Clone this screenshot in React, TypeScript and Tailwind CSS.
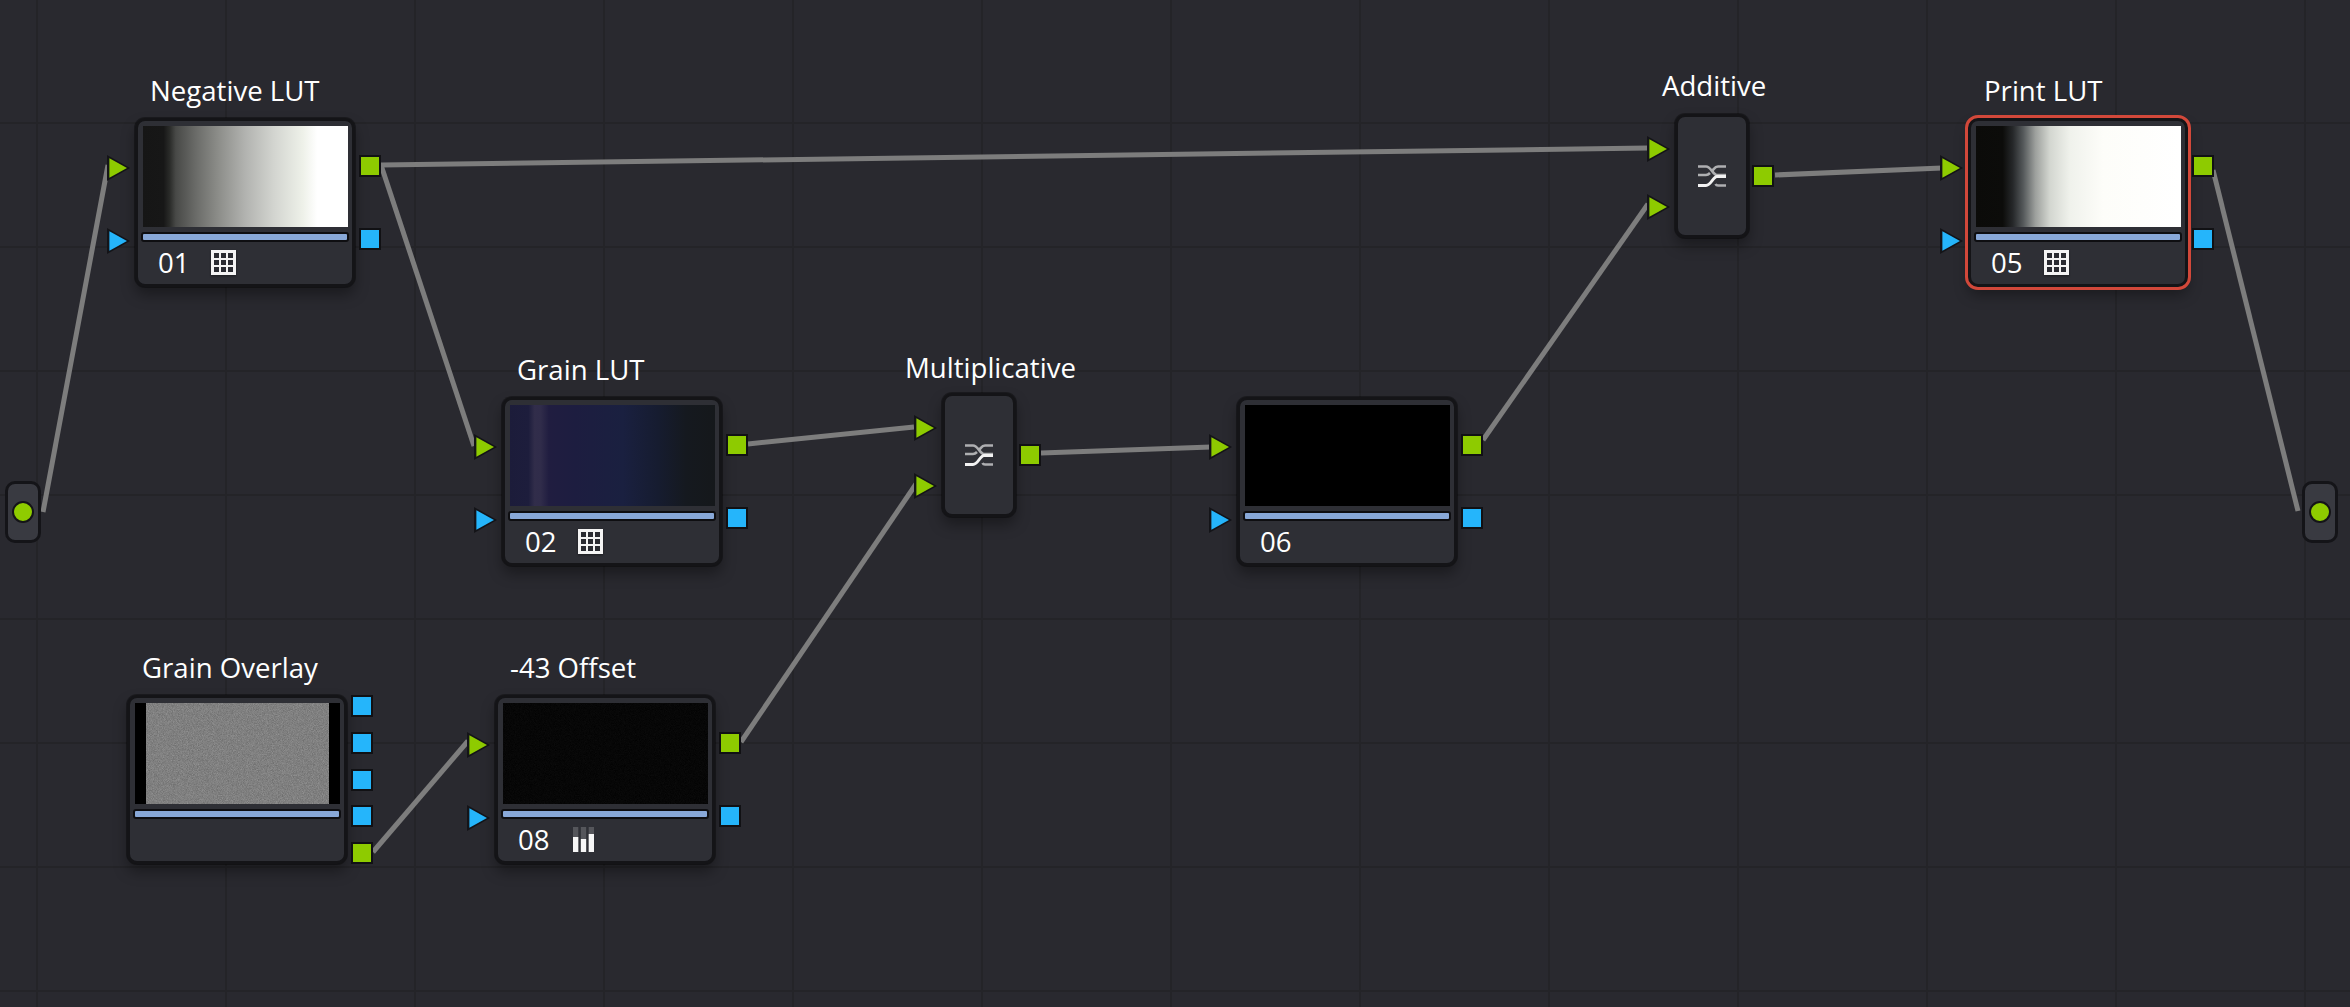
import React from "react";

const GREEN = "#8ecb00";
const BLUE = "#25b5fb";
const FONT = "font-['Open_Sans','Noto_Sans',sans-serif]";

function TriPort({ color }: { color: string }) {
  return (
    <svg width="23" height="26" viewBox="0 0 23 26" className="block shrink-0">
      <polygon points="0,0 23,13 0,26" fill="#141418" />
      <polygon points="2.4,3.2 20,13 2.4,22.8" fill={color} />
    </svg>
  );
}

function SquarePort({ color }: { color: string }) {
  return <div className="w-[22px] h-[22px] shrink-0 border-[2px] border-[#111114]" style={{ background: color }} />;
}

function GridIcon() {
  const cells: React.ReactElement[] = [];
  for (let r = 0; r < 3; r++)
    for (let c = 0; c < 3; c++)
      cells.push(<rect key={`${r}${c}`} x={3 + c * 7} y={3 + r * 7} width="5" height="5" fill="#2a2b31" />);
  return (
    <svg width="25" height="25" viewBox="0 0 25 25" className="drop-shadow-[0_1px_1px_rgba(0,0,0,0.4)]">
      <rect width="25" height="25" fill="#f4f4f4" />
      {cells}
    </svg>
  );
}

function BarsIcon() {
  return (
    <svg width="21" height="25" viewBox="0 0 21 25" className="ml-[2px]">
      <rect x="0" y="0" width="5.3" height="25" fill="#55565b" />
      <rect x="7.85" y="0" width="5.3" height="25" fill="#55565b" />
      <rect x="15.7" y="0" width="5.3" height="25" fill="#55565b" />
      <rect x="0" y="10" width="5.3" height="15" fill="#f6f6f6" />
      <rect x="7.85" y="12" width="5.3" height="13" fill="#f6f6f6" />
      <rect x="15.7" y="7" width="5.3" height="18" fill="#f6f6f6" />
    </svg>
  );
}

function MixIcon() {
  return (
    <svg width="30" height="24" viewBox="0 0 30 24" fill="none">
      <path d="M1 2.5 H9 C14 2.5 16 11 20 11 H29" stroke="#aeafb1" strokeWidth="2.6" />
      <path d="M29 2.5 H21 C18 2.5 17 5 15 7" stroke="#aeafb1" strokeWidth="2.6" />
      <path d="M1 11 H9 C11 11 12 10 13 9" stroke="#aeafb1" strokeWidth="2.6" />
      <path d="M29 21.5 H21 C20 21.5 19 21 18.5 20" stroke="#aeafb1" strokeWidth="2.6" />
      <path d="M1 21.5 H9 C14 21.5 16 12.5 20 12.5 H29" stroke="#f2f2f2" strokeWidth="2.8" />
    </svg>
  );
}

function Label({ text, indent, height }: { text: string; indent: number; height: number }) {
  return (
    <div
      className={`${FONT} text-white text-[27.6px] leading-[38px] whitespace-nowrap`}
      style={{ marginLeft: indent, height }}
    >
      {text}
    </div>
  );
}

type NodeDef = {
  x: number;
  y: number;
  label: string;
  num?: string;
  icon?: "grid" | "bars";
  thumb: string;
  selected?: boolean;
  noInputs?: boolean;
  grainy?: "strong" | "faint";
};

function Grain({ strong }: { strong: boolean }) {
  return strong ? (
    <div className="h-full mx-[11px] bg-[#808080] overflow-hidden">
      <svg width="183" height="101" className="block opacity-20">
        <rect width="183" height="101" filter="url(#grain)" />
      </svg>
    </div>
  ) : (
    <svg width="205" height="101" className="block opacity-[0.05]">
      <rect width="205" height="101" filter="url(#grain)" />
    </svg>
  );
}

function ColorNode({ n }: { n: NodeDef }) {
  return (
    <div className="absolute flex flex-col" style={{ left: n.x - 28, top: n.y - 47 }}>
      <Label text={n.label} indent={n.selected ? 44 : 43} height={47} />
      <div className="flex">
        <div className="w-[28px] flex flex-col gap-[47px] pt-[37px]">
          {!n.noInputs && (
            <>
              <TriPort color={GREEN} />
              <TriPort color={BLUE} />
            </>
          )}
        </div>
        <div
          className={`w-[220px] h-[169px] bg-[#2e2f35] rounded-[10px] border-[3px] border-[#141417] shadow-[0_0_0_1px_rgba(0,0,0,0.35),0_8px_14px_rgba(0,0,0,0.35)] px-[5px] pt-[5px] flex flex-col ${
            n.selected ? "outline-[3px] outline-[#d2483a]" : ""
          }`}
        >
          <div className={`w-[205px] h-[101px] shrink-0 overflow-hidden ${n.thumb}`}>
            {n.grainy && <Grain strong={n.grainy === "strong"} />}
          </div>
          <div className="mt-[5px] -mx-[2px] h-[10px] rounded-[3px] border-[2px] border-[#0e0e11] bg-[#88a8d8]" />
          <div className={`${FONT} flex items-center h-[43px] pl-[15px] text-white text-[27.6px]`}>
            {n.num && <span className="w-[53px]">{n.num}</span>}
            {n.icon === "grid" && <GridIcon />}
            {n.icon === "bars" && <BarsIcon />}
          </div>
        </div>
        <div
          className={`ml-[4px] flex flex-col ${
            n.noInputs ? "h-[169px] justify-between" : "gap-[51px] pt-[37px]"
          }`}
        >
          {n.noInputs && (
            <>
              <SquarePort color={BLUE} />
              <SquarePort color={BLUE} />
              <SquarePort color={BLUE} />
            </>
          )}
          {n.noInputs ? (
            <>
              <SquarePort color={BLUE} />
              <SquarePort color={GREEN} />
            </>
          ) : (
            <>
              <SquarePort color={GREEN} />
              <SquarePort color={BLUE} />
            </>
          )}
        </div>
      </div>
    </div>
  );
}

function MixNode({ x, y, label, indent, labelH }: { x: number; y: number; label: string; indent: number; labelH: number }) {
  return (
    <div className="absolute flex flex-col" style={{ left: x - 28, top: y - labelH }}>
      <Label text={label} indent={indent} height={labelH} />
      <div className="flex">
        <div className="w-[28px] flex flex-col gap-[32px] pt-[22px]">
          <TriPort color={GREEN} />
          <TriPort color={GREEN} />
        </div>
        <div className="w-[74px] h-[124px] bg-[#2e2f35] rounded-[10px] border-[3px] border-[#141417] shadow-[0_0_0_1px_rgba(0,0,0,0.35),0_8px_14px_rgba(0,0,0,0.35)] flex items-center justify-center">
          <MixIcon />
        </div>
        <div className="ml-[3px] pt-[51px]">
          <SquarePort color={GREEN} />
        </div>
      </div>
    </div>
  );
}

function Pill({ side }: { side: "left" | "right" }) {
  return (
    <div
      className={`absolute top-[481px] w-[36px] h-[62px] rounded-[10px] border-[3px] border-[#141418] bg-[#393a41] flex items-center justify-center ${
        side === "left" ? "left-[5px]" : "left-[2302px]"
      }`}
    >
      <div className="w-[22px] h-[22px] rounded-full bg-[#8fcc00] border-[2px] border-[#141418]" />
    </div>
  );
}

const wires: [number, number, number, number][] = [
  [43, 512, 108, 165],
  [381, 165, 474, 446],
  [381, 165, 1648, 148],
  [1775, 175, 1942, 168],
  [2213, 170, 2298, 511],
  [748, 444, 914, 427],
  [1041, 453, 1211, 447],
  [1483, 440, 1648, 204],
  [373, 852, 468, 741],
  [741, 742, 916, 484],
];

const nodes: NodeDef[] = [
  {
    x: 135,
    y: 118,
    label: "Negative LUT",
    num: "01",
    icon: "grid",
    thumb:
      "bg-[linear-gradient(to_right,#161616_0%,#171717_10%,#2a2b29_13%,#484947_16%,#6b6c69_26%,#8a8b87_36%,#b2b3b0_50%,#d3d5d0_64%,#eef1e9_78%,#ffffff_85%,#ffffff_100%)]",
  },
  {
    x: 502,
    y: 397,
    label: "Grain LUT",
    num: "02",
    icon: "grid",
    thumb:
      "bg-[linear-gradient(to_right,#1c1c3a_0%,#1d1d3c_9%,#312d4a_12%,#302c4a_15%,#201d40_19%,#1d1d40_32%,#1a2040_55%,#161c30_72%,#15191f_86%,#15181b_100%)]",
  },
  { x: 1237, y: 397, label: "", num: "06", thumb: "bg-black" },
  { x: 495, y: 695, label: "-43 Offset", num: "08", icon: "bars", thumb: "bg-black", grainy: "faint" },
  { x: 127, y: 695, label: "Grain Overlay", thumb: "bg-black", noInputs: true, grainy: "strong" },
  {
    x: 1968,
    y: 118,
    label: "Print LUT",
    num: "05",
    icon: "grid",
    selected: true,
    thumb:
      "bg-[linear-gradient(to_right,#0b0b09_0%,#0c0c0a_13%,#26282a_18%,#54585a_23%,#9da09d_29%,#d3d6d0_36%,#f0f2ec_46%,#fdfdf9_62%,#ffffff_100%)]",
  },
];

export default function App() {
  return (
    <div className="relative w-[2350px] h-[1007px] overflow-hidden bg-[#29292f] bg-[linear-gradient(to_right,#242428_2px,transparent_2px),linear-gradient(to_bottom,#242428_2px,transparent_2px)] bg-[size:189px_124px] bg-[position:36px_-2px]">
      <svg className="absolute inset-0" width="2350" height="1007">
        <defs>
          <filter id="grain" x="0" y="0" width="100%" height="100%" colorInterpolationFilters="sRGB">
            <feTurbulence type="fractalNoise" baseFrequency="1.2" numOctaves="2" seed="4" />
            <feColorMatrix type="matrix" values="1 0 0 0 0  1 0 0 0 0  1 0 0 0 0  0 0 0 0 1" />
          </filter>
        </defs>
        {wires.map((w, i) => (
          <line key={i} x1={w[0]} y1={w[1]} x2={w[2]} y2={w[3]} stroke="#7d7d7d" strokeWidth="5" />
        ))}
      </svg>

      {nodes.map((n) => (
        <ColorNode key={n.x} n={n} />
      ))}

      <MixNode x={942} y={393} label="Multiplicative" indent={-9} labelH={45} />
      <MixNode x={1675} y={114} label="Additive" indent={15} labelH={48} />

      <Pill side="left" />
      <Pill side="right" />
    </div>
  );
}
